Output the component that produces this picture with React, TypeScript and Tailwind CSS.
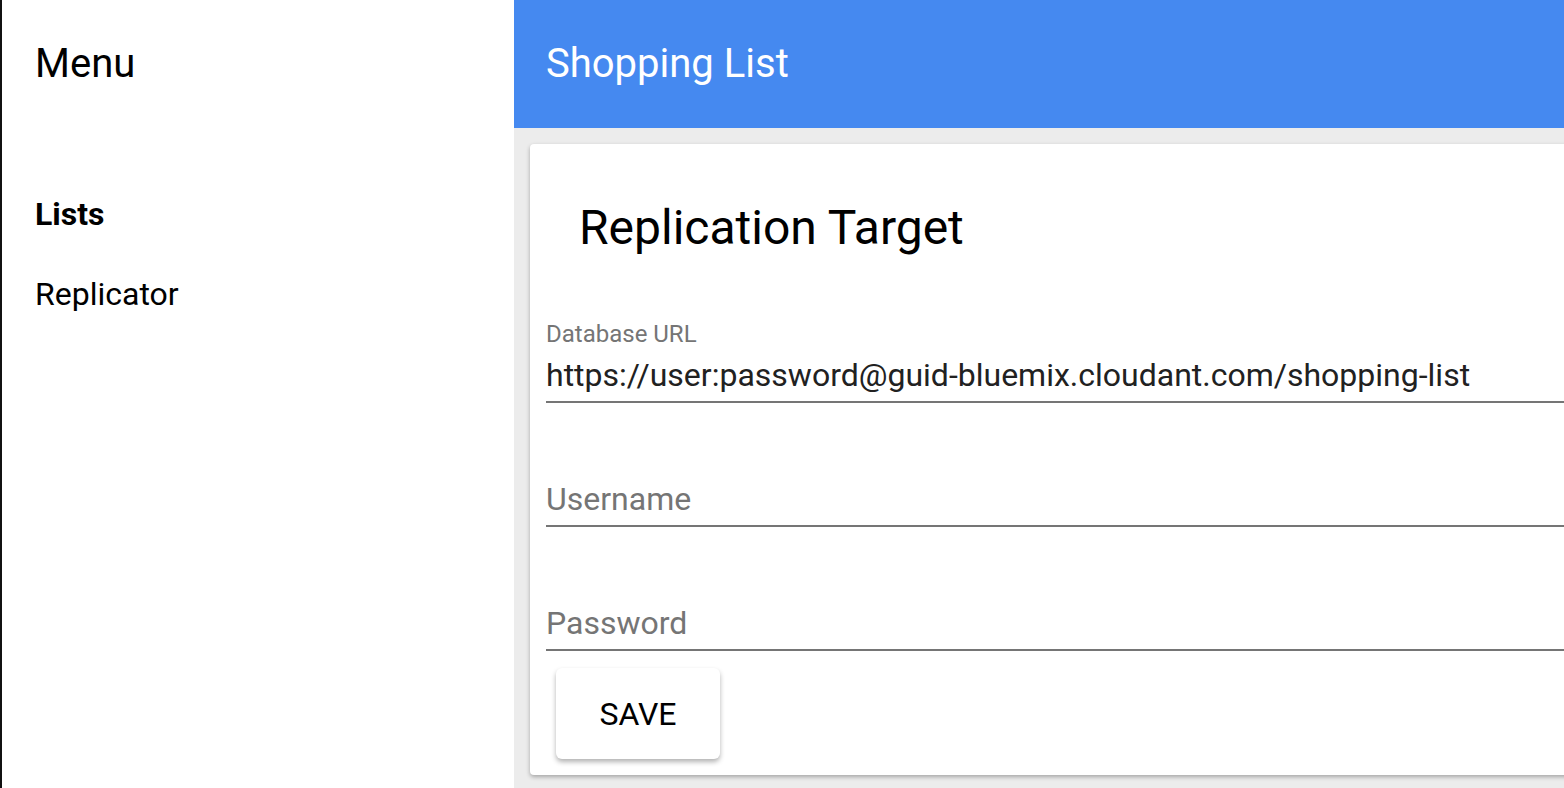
import React from "react";

function Field({ label, value, placeholder }: { label?: string; value?: string; placeholder?: string }) {
  return (
    <div className="flex flex-col">
      <div className="h-[24px] text-[24px] leading-[24px] text-[#757575]">{label ?? ""}</div>
      <div className="mt-[11px] h-[36px] text-[32px] leading-[36px] whitespace-nowrap">
        {value ? (
          <span className="text-[#212121]">{value}</span>
        ) : (
          <span className="text-[#757575]">{placeholder}</span>
        )}
      </div>
      <div className="mt-[8px] h-[2px] bg-[#757575]" />
    </div>
  );
}

export default function App() {
  return (
    <div
      className="flex h-[788px] w-[1564px] overflow-hidden bg-white"
      style={{ fontFamily: "Roboto, 'Noto Sans', sans-serif" }}
    >
      <aside className="flex w-[514px] shrink-0 flex-col border-l-2 border-[#111111] bg-white">
        <div className="flex h-[128px] items-center pl-[33px] text-[40px] text-black">Menu</div>
        <nav className="mt-[46px] flex flex-col pl-[33px]">
          <div className="flex h-[80px] items-center text-[32px] font-bold text-black">Lists</div>
          <div className="flex h-[80px] items-center text-[32px] text-black">Replicator</div>
        </nav>
      </aside>
      <main className="flex min-w-0 flex-1 flex-col bg-[#ececec]">
        <header className="flex h-[128px] shrink-0 items-center bg-[#4589f0] pl-[32px] text-[40px] text-white">
          Shopping List
        </header>
        <div className="pl-[16px] pt-[16px]">
          <div className="mr-[-20px] flex h-[631px] flex-col rounded-[4px] bg-white px-[16px] pt-[56px] shadow-[0_2px_4px_rgba(0,0,0,0.3)]">
            <h1 className="h-[56px] pl-[33px] text-[48px] leading-[56px] text-black">Replication Target</h1>
            <div className="mt-[66px] flex flex-col gap-[43px]">
              <Field label="Database URL" value="https://user:password@guid-bluemix.cloudant.com/shopping-list" />
              <Field placeholder="Username" />
              <Field placeholder="Password" />
            </div>
            <button className="ml-[10px] mt-[17px] flex h-[91px] w-[164px] items-center justify-center rounded-[6px] bg-white text-[32px] text-black shadow-[0_3px_5px_rgba(0,0,0,0.3)]">
              SAVE
            </button>
          </div>
        </div>
      </main>
    </div>
  );
}
